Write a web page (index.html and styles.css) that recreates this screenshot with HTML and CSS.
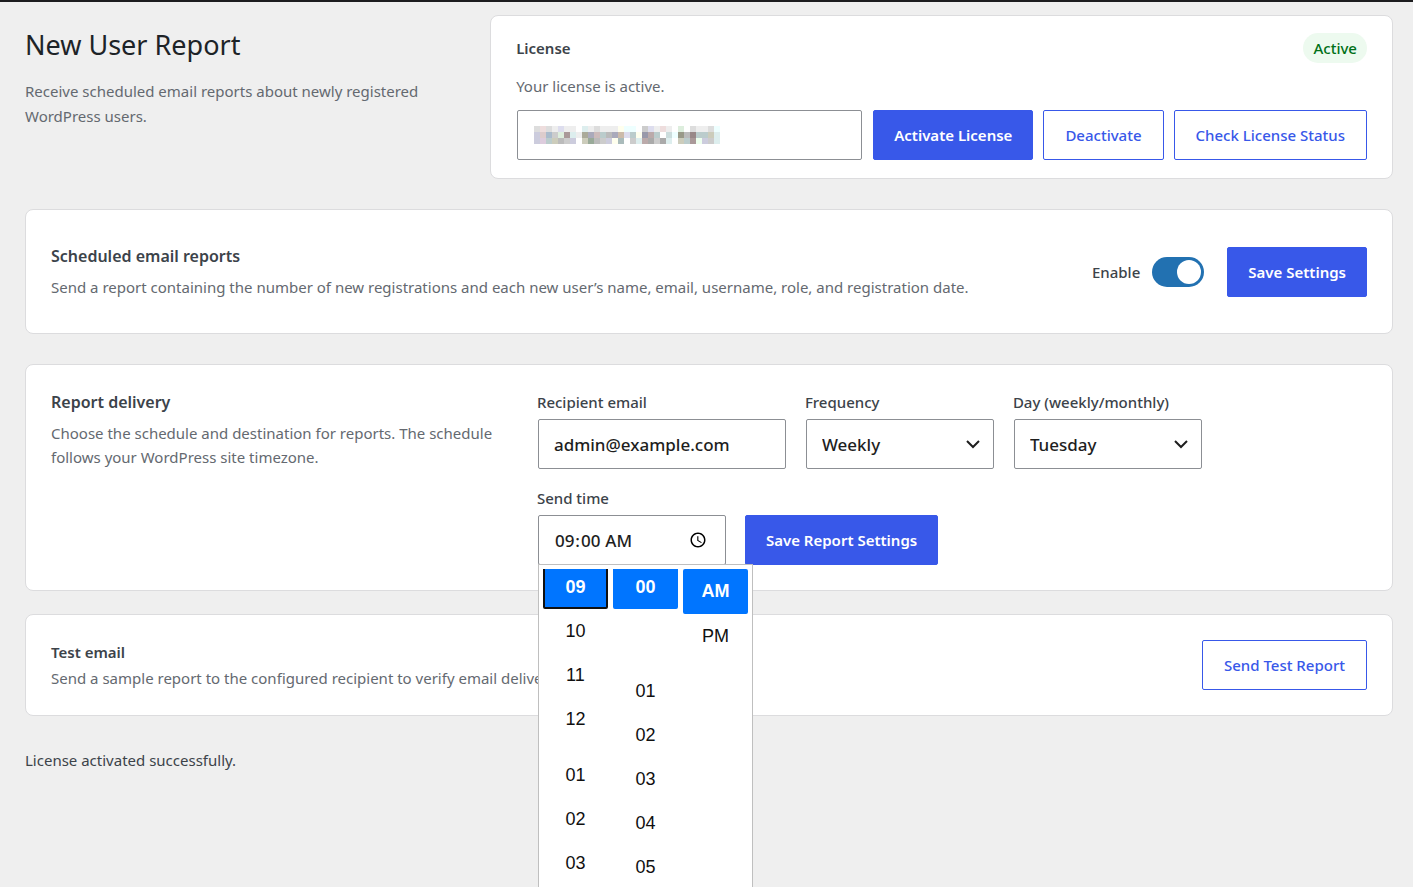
FILE: index.html
```html
<!DOCTYPE html>
<html lang="en">
<head>
    <meta charset="utf-8">
    <title>New User Report</title>
    <link rel="stylesheet" href="styles.css">
</head>
<body>
    <main class="page">
        <header class="page-header">
            <div class="intro">
                <h1>New User Report</h1>
                <p>Receive scheduled email reports about newly registered WordPress users.</p>
            </div>
            <section class="card license">
                <div class="license-top">
                    <h2><label for="license_key">License</label></h2>
                    <span class="badge">Active</span>
                </div>
                <p>Your license is active.</p>
                <form class="license-form">
                    <div class="key-field">
                        <input type="text" id="license_key" name="license_key">
                        <svg class="key-mask" id="keyMask" viewBox="0 0 31 3" shape-rendering="crispEdges" aria-hidden="true"></svg>
                    </div>
                    <button type="button" class="btn primary">Activate License</button>
                    <button type="button" class="btn">Deactivate</button>
                    <button type="button" class="btn">Check License Status</button>
                </form>
            </section>
        </header>

        <section class="card schedule">
            <div class="card-text">
                <h2 class="large">Scheduled email reports</h2>
                <p>Send a report containing the number of new registrations and each new user’s name, email, username, role, and registration date.</p>
            </div>
            <div class="schedule-actions">
                <label for="enable">Enable</label>
                <input type="checkbox" class="toggle" id="enable" name="enable" checked>
                <button type="button" class="btn primary">Save Settings</button>
            </div>
        </section>

        <section class="card delivery">
            <div class="card-text">
                <h2 class="large">Report delivery</h2>
                <p>Choose the schedule and destination for reports. The schedule follows your WordPress site timezone.</p>
            </div>
            <form class="fields">
                <div class="field wide">
                    <label for="email">Recipient email</label>
                    <input type="email" id="email" name="email" value="admin@example.com">
                </div>
                <div class="field">
                    <label for="frequency">Frequency</label>
                    <div class="select">
                        <select id="frequency" name="frequency">
                            <option>Daily</option>
                            <option selected>Weekly</option>
                            <option>Monthly</option>
                        </select>
                        <svg viewBox="0 0 20 20" aria-hidden="true"><path d="M4 7l6 6 6-6"/></svg>
                    </div>
                </div>
                <div class="field">
                    <label for="day">Day (weekly/monthly)</label>
                    <div class="select">
                        <select id="day" name="day">
                            <option>Monday</option>
                            <option selected>Tuesday</option>
                            <option>Wednesday</option>
                        </select>
                        <svg viewBox="0 0 20 20" aria-hidden="true"><path d="M4 7l6 6 6-6"/></svg>
                    </div>
                </div>
                <div class="field">
                    <label for="time">Send time</label>
                    <input type="time" id="time" name="time" value="09:00">
                    <div class="picker">
                        <div class="picker-col scrolled">
                            <button type="button" class="selected focused">09</button>
                            <button type="button">10</button>
                            <button type="button">11</button>
                            <button type="button">12</button>
                            <button type="button" class="hour-start">01</button>
                            <button type="button">02</button>
                            <button type="button">03</button>
                        </div>
                        <div class="picker-col scrolled">
                            <button type="button" class="selected">00</button>
                            <button type="button" class="minute-start">01</button>
                            <button type="button">02</button>
                            <button type="button">03</button>
                            <button type="button">04</button>
                            <button type="button">05</button>
                        </div>
                        <div class="picker-col">
                            <button type="button" class="selected">AM</button>
                            <button type="button">PM</button>
                        </div>
                    </div>
                </div>
                <button type="button" class="btn primary">Save Report Settings</button>
            </form>
        </section>

        <section class="card test">
            <div class="card-text">
                <h2>Test email</h2>
                <p>Send a sample report to the configured recipient to verify email delivery.</p>
            </div>
            <button type="button" class="btn">Send Test Report</button>
        </section>

        <p class="notice">License activated successfully.</p>
    </main>

    <script>
        // Colour blocks that hide the license key
        const rows = [
            "ddd edd ddd eee dde eee eee fff dee eee ddd eee eee eee ffe eff eff fff ccc dde eee edd eee fff ded fff ddd eee eee ddd eff",
            "ccd dcc abc ccc ded a99 dee eee aa9 aab cbb bcc bbb aab cba dde bcc ffe 99a baa bcc fff cdd eff 998 bbb 988 bcc bcc ccb dee",
            "ccd dcd bcc ccb bbb ccc ccd fff ccb 9a9 bbb ccc ccd ffe abb fff ccc dee baa aaa ccc aaa dee fff ccb bcc a99 efe ccd ccc dee"
        ];
        const mask = document.getElementById("keyMask");

        rows.forEach((row, y) => {
            row.split(" ").forEach((color, x) => {
                const rect = document.createElementNS("http://www.w3.org/2000/svg", "rect");
                rect.setAttribute("x", x);
                rect.setAttribute("y", y);
                rect.setAttribute("width", 1);
                rect.setAttribute("height", 1);
                rect.setAttribute("fill", "#" + color);
                mask.appendChild(rect);
            });
        });
    </script>
</body>
</html>
```
FILE: styles.css
```css
* {
    box-sizing: border-box;
}

body {
    margin: 0;
    min-height: 100vh;
    border-top: 2px solid #1d1d1f;
    background-color: #efefef;
    color: #3c434a;
    font-family: "Segoe UI", "Noto Sans", sans-serif;
    font-size: 15px;
    line-height: 24px;
}

h1, h2, p {
    margin: 0;
}

.page {
    position: relative;
    min-height: calc(100vh - 2px);
    padding: 13px 20px 0 25px;
    overflow: hidden;
}

.page-header {
    display: grid;
    grid-template-columns: 1fr 66%;
    margin-bottom: 30px;
}

.intro {
    padding: 10px 30px 0 0;
}

.intro p {
    line-height: 25px;
}

h1 {
    color: #1d2327;
    font-size: 27px;
    font-weight: 400;
    line-height: 40px;
    margin-bottom: 14px;
}

h2 {
    font-size: 15px;
    font-weight: 600;
    line-height: 24px;
    margin-bottom: 2px;
}

h2.large {
    font-size: 16px;
    margin-bottom: 7px;
}

p {
    color: #646970;
}

.card {
    background-color: #fff;
    border: 1px solid #dcdcde;
    border-radius: 8px;
    padding: 25px;
}

.license {
    padding: 17px 25px 18px;
}

.license-top {
    display: flex;
    justify-content: space-between;
    align-items: center;
    margin-bottom: 11px;
}

.license-top h2 {
    margin: 0;
}

.badge {
    padding: 3px 10px;
    border-radius: 15px;
    background-color: #edfaef;
    color: #007017;
    font-size: 15px;
    font-weight: 500;
}

.license-form {
    display: flex;
    gap: 10px;
    margin-top: 12px;
}

.key-field {
    position: relative;
    flex: 1;
}

.key-mask {
    position: absolute;
    left: 18px;
    top: 16px;
    width: 186px;
    height: 18px;
}

input, select {
    display: block;
    width: calc(100% - 2px);
    height: 50px;
    margin: 0 1px;
    padding: 0 15px;
    border: 1px solid #8c8f94;
    border-radius: 2px;
    background-color: #fff;
    color: #1e1e1e;
    font-family: inherit;
    font-size: 17px;
    font-weight: 500;
}

.btn {
    height: 50px;
    padding: 0 21px;
    border: 1px solid #3858e9;
    border-radius: 2px;
    background-color: #fff;
    color: #3858e9;
    font-family: inherit;
    font-size: 15px;
    font-weight: 500;
    white-space: nowrap;
    cursor: pointer;
}

.btn.primary {
    padding: 0 20px;
    background-color: #3858e9;
    color: #fff;
    font-weight: 600;
}

.schedule {
    display: flex;
    justify-content: space-between;
    align-items: center;
    padding: 34px 25px;
    margin-bottom: 30px;
}

.schedule-actions {
    display: flex;
    align-items: center;
}

.schedule-actions label {
    font-weight: 500;
}

.toggle {
    appearance: none;
    display: flex;
    align-items: center;
    justify-content: flex-end;
    width: 52px;
    height: 30px;
    margin: 0 23px 0 12px;
    padding: 0 3px;
    border: none;
    border-radius: 15px;
    background-color: #2271b1;
}

.toggle::before {
    content: "";
    width: 24px;
    height: 24px;
    border-radius: 50%;
    background-color: #fff;
}

.delivery {
    display: grid;
    grid-template-columns: 24fr 41fr;
    margin-bottom: 23px;
}

.delivery .card-text {
    padding-right: 24px;
}

.fields {
    display: flex;
    flex-wrap: wrap;
    align-items: flex-end;
    gap: 17px 18px;
}

.field {
    position: relative;
    width: 190px;
}

.field.wide {
    width: 250px;
}

.field label {
    display: block;
    margin-bottom: 5px;
    font-weight: 500;
}

.select {
    position: relative;
}

.select select {
    appearance: none;
}

.select svg {
    position: absolute;
    right: 12px;
    top: 15px;
    width: 20px;
    height: 20px;
    fill: none;
    stroke: #1e1e1e;
    stroke-width: 2;
    pointer-events: none;
}

.picker {
    position: absolute;
    z-index: 1;
    top: calc(100% - 1px);
    left: 1px;
    display: flex;
    gap: 5px;
    height: 360px;
    padding: 4px;
    border: 1px solid #bfbfbf;
    background-color: #fff;
}

.picker-col {
    width: 65px;
    overflow: hidden;
}

.picker button {
    display: block;
    width: 100%;
    height: 45px;
    padding: 0;
    border: 2px solid transparent;
    border-radius: 2px;
    background-color: transparent;
    color: #101010;
    font-family: "Liberation Sans", Arial, sans-serif;
    font-size: 18px;
}

.picker .scrolled button {
    height: 44px;
}

.picker .selected {
    background-color: #0075ff;
    border-color: #0075ff;
    color: #fff;
    font-weight: 700;
}

.picker .focused {
    border-color: #101010;
}

.scrolled button:first-child {
    margin-top: -4px;
}

.picker .hour-start {
    margin-top: 12px;
}

.picker .minute-start {
    margin-top: 60px;
}

.test {
    display: flex;
    justify-content: space-between;
    align-items: center;
    margin-bottom: 32px;
}

.notice {
    color: #3c434a;
}
```
